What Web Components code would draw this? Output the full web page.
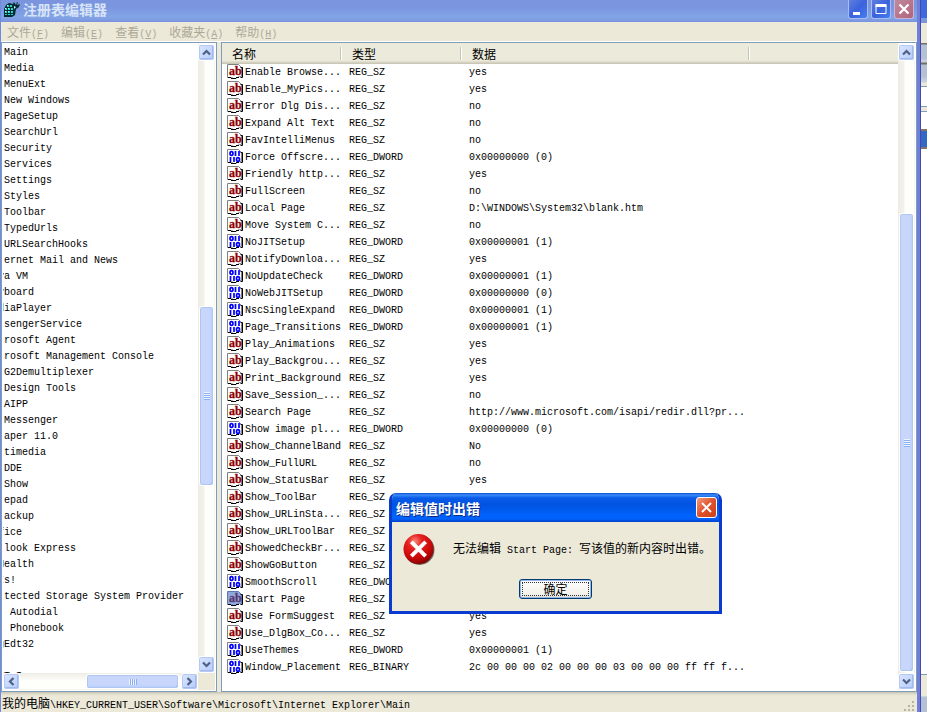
<!DOCTYPE html>
<html lang="zh-CN">
<head>
<meta charset="utf-8">
<title>注册表编辑器</title>
<style>
html, body { margin: 0; height: 100%; }
body {
  --face: #ece9d8; --edge: #7f9db9;
  font: 12px/16px "Liberation Mono", "Noto Sans CJK SC", monospace;
  color: #000; background: #fff; overflow: hidden;
}
</style>
</head>
<body>
<desktop-view></desktop-view>
<script>
const define = (name, html, setup) => customElements.define(name, class extends HTMLElement {
  constructor() {
    super();
    const root = this.attachShadow({ mode: 'open' });
    const t = document.createElement('template');
    t.innerHTML = html;
    root.append(t.content.cloneNode(true));
  }
  connectedCallback() { if (setup) setup(this, this.shadowRoot); }
});

const MIX = `.l { font-family: "Liberation Mono", monospace; font-size: 10px; }`;

/* Registry value icon: string or binary */
define('value-icon', `
<style>
:host { display: block; width: 17px; height: 16px; flex: none; white-space: normal; }
svg { display: block; }
text { font: bold 12px/12px "Liberation Serif", serif; fill: #900000; stroke: #900000; stroke-width: .3px; }
:host([selected]) path.page { fill: #8fa9dc; stroke: #5a78b8; }
:host([selected]) text { fill: #59376b; stroke: #59376b; }
</style>
<svg width="17" height="16" viewBox="0 0 17 16" aria-hidden="true">
<path class="page" d="M.5 13.500V.5h11l3 3v9h-2l-2 1-2 1h-2l-2-1h-4z" fill="#fff" stroke="#808080"/>
<path d="M13.500 3.500H15.500V13.500H13.500M1 13.500h3M4 14.500h5M9 13.500h3" fill="none" stroke="#000"/>
<g class="str"><text x="2" y="11">ab</text></g>
<g class="bin" fill="none" stroke="#0000ff" stroke-width="1.700"><ellipse cx="4.500" cy="4.500" rx="1.500" ry="1.800"/><path d="M8.500 2v5M12 2v5M3.500 8v5M7 8v5"/><ellipse cx="11" cy="10.500" rx="1.500" ry="1.800"/></g>
</svg>`, (h, r) => {
  r.querySelector(h.getAttribute('kind') === 'bin' ? '.str' : '.bin').remove();
});

/* Luna scroll bar; before / thumb / after give the track proportions */
define('luna-scroll', `
<style>
:host { display: flex; flex-direction: column; width: 17px; flex: none; background: linear-gradient(90deg, #eeede5, #f3f1ec 6px, #fefefb 7px, #fefefb 16px, #eeede5); }
:host([horizontal]) { flex-direction: row; width: auto; height: 17px; background: linear-gradient(#eeede5, #f6f5f0 4px, #fefefb 8px, #fefefb 16px, #eeede5); }
button { all: unset; box-sizing: border-box; width: 17px; height: 17px; flex: none; display: grid; place-items: center;
  border: 1px solid #fff; border-radius: 3px; background: linear-gradient(135deg, #dbe6ff, #b5cbfb); box-shadow: inset 0 0 0 1px #b3c8f5, inset -1px -1px 0 1px #a2bbec; }
.thumb { box-sizing: border-box; border: 1px solid #fff; border-radius: 3px; display: grid; place-items: center;
  background: linear-gradient(90deg, #c8d6fb 9px, #b9cffb 13px, #b2cbf9); box-shadow: inset 0 0 0 1px #b0c5f2, inset -1px -1px 0 #8facde; margin: 0 1px; }
:host([horizontal]) .thumb { background: linear-gradient(#c8d6fb 9px, #b9cffb 13px, #b2cbf9); margin: 1px 0; }
.grip { width: 6px; height: 8px; background: repeating-linear-gradient(#eef4fe 0 1px, #8cb0f8 1px 2px); }
:host([horizontal]) .grip { width: 8px; height: 6px; background: repeating-linear-gradient(90deg, #eef4fe 0 1px, #8cb0f8 1px 2px); }
:host([horizontal]) svg { transform: rotate(-90deg); }
</style>
<button type="button" aria-label="Back"><svg width="9" height="7" viewBox="0 0 9 7"><path d="M1 5.500 4.500 2 8 5.500" fill="none" stroke="#4d6185" stroke-width="2.200"/></svg></button>
<div class="a"></div><div class="thumb"><div class="grip"></div></div><div class="b"></div>
<button type="button" aria-label="Forward"><svg width="9" height="7" viewBox="0 0 9 7"><path d="M1 1.500 4.500 5 8 1.500" fill="none" stroke="#4d6185" stroke-width="2.200"/></svg></button>`,
(h, r) => {
  const [a, t, b] = h.getAttribute('track').split(' ');
  r.querySelector('.a').style.flex = a + ' 1 0';
  r.querySelector('.thumb').style.flex = t + ' 1 0';
  r.querySelector('.b').style.flex = b + ' 1 0';
});

define('title-bar', `
<style>
:host { display: flex; align-items: flex-start; height: 22px; flex: none; padding: 0 3px 0 2px; color: #d8e4f8;
  background: linear-gradient(#7a94de, #7b96e0 8px, #82a5e6 17px, #7d98e0 21px, #7a8cdc); }
h1 { margin: 0 auto 0 2px; font: bold 14px/18px "Noto Sans CJK SC", sans-serif; }
button { all: unset; box-sizing: border-box; width: 20px; height: 19px; margin-left: 3px; display: grid; place-items: center;
  border: 1px solid #a9bdf0; border-top: 0; border-radius: 0 0 3px 3px; background: linear-gradient(135deg, #5f80e0, #3a62dc 50%, #467ff0); }
button.x { background: linear-gradient(135deg, #c08a9c, #b0647c); border-color: #c8b4d8; }
svg { display: block; }
</style>
<svg width="18" height="18" viewBox="0 0 18 18" aria-hidden="true">
<path d="M1 9 3 5l3-2 4 1 1-2 2 3 1-3h1l-1 3 3-1-1 3-3 2-1 6-3 2H1z" fill="#052c30"/>
<path d="M4 5h2v2H4zM7 5h2v2H7zM2 8h2v2H2zM5 8h2v2H5zM8 8h2v2H8zM2 11h2v2H2zM5 11h2v2H5zM8 11h2v2H8zM2 14h2v1H2zM5 14h2v1H5zM8 14h2v1H8z" fill="#22d4d0"/>
<path d="M4 5h1v1H4zM2 8h1v1H2zM5 8h1v1H5zM2 11h1v1H2zM5 11h1v1H5zM11 6l2 1-2 2z" fill="#b8ffff"/>
</svg>
<h1>注册表编辑器</h1>
<button type="button" aria-label="最小化"><svg width="14" height="14"><path d="M2 10h7v3H2z" fill="#fff"/></svg></button>
<button type="button" aria-label="最大化"><svg width="14" height="14"><path d="M2 3.500h10v8H2z" fill="none" stroke="#fff"/><path d="M1.500 2h11v3h-11z" fill="#fff"/></svg></button>
<button type="button" class="x" aria-label="关闭"><svg width="14" height="14"><path d="M2.500 2.500l9 9M11.500 2.500l-9 9" stroke="#fff" stroke-width="2.200"/></svg></button>`);

define('menu-bar', `
<style>${MIX}
:host { display: flex; height: 19px; flex: none; background: var(--face); border-bottom: 1px solid #fff; }
button { all: unset; padding: 0 6px; font: 12px/19px "Noto Sans CJK SC", sans-serif; color: #aca899; white-space: nowrap; }
u { text-underline-offset: 1px; }
</style>
<button type="button">文件<span class="l">(<u>F</u>)</span></button><button type="button">编辑<span class="l">(<u>E</u>)</span></button><button type="button">查看<span class="l">(<u>V</u>)</span></button><button type="button">收藏夹<span class="l">(<u>A</u>)</span></button><button type="button">帮助<span class="l">(<u>H</u>)</span></button>`);

/* Tree keys; a leading "<" marks a label whose first letter is cut by the pane edge */
const keys = `Main|Media|MenuExt|New Windows|PageSetup|SearchUrl|Security|Services|Settings|Styles|Toolbar|TypedUrls|URLSearchHooks|ernet Mail and News|<va VM|<yboard|<diaPlayer|sengerService|rosoft Agent|rosoft Management Console|G2Demultiplexer|Design Tools|AIPP|Messenger|aper 11.0|timedia|DDE|Show|epad|ackup|<fice|look Express|<Health|<Is!|tected Storage System Provider| Autodial| Phonebook|<gEdt32||TeI`.split('|');

define('key-tree', `
<style>
:host { display: grid; grid-template: minmax(0, 1fr) 17px / minmax(0, 1fr) 17px; box-sizing: border-box; border: 1px solid var(--edge); padding: 1px; background: #fff; min-height: 0; }
ul { margin: 0; padding: 1px 0 0 1px; list-style: none; overflow: hidden; font-size: 10px; line-height: 16px; }
li { height: 16px; white-space: pre; }
li.cut { text-indent: -6px; }
.corner { background: var(--face); }
</style>
<ul></ul><luna-scroll track="246 179 171"></luna-scroll>
<luna-scroll horizontal track="67 92 2"></luna-scroll><div class="corner"></div>`, (h, r) => {
  const ul = r.querySelector('ul');
  for (const k of keys) {
    const li = document.createElement('li');
    if (k[0] === '<') li.className = 'cut';
    li.textContent = k.replace('<', '');
    ul.append(li);
  }
});

const values = `Enable Browse...|s|yes
Enable_MyPics...|s|yes
Error Dlg Dis...|s|no
Expand Alt Text|s|no
FavIntelliMenus|s|no
Force Offscre...|d|0x00000000 (0)
Friendly http...|s|yes
FullScreen|s|no
Local Page|s|D:\\WINDOWS\\System32\\blank.htm
Move System C...|s|no
NoJITSetup|d|0x00000001 (1)
NotifyDownloa...|s|yes
NoUpdateCheck|d|0x00000001 (1)
NoWebJITSetup|d|0x00000000 (0)
NscSingleExpand|d|0x00000001 (1)
Page_Transitions|d|0x00000001 (1)
Play_Animations|s|yes
Play_Backgrou...|s|yes
Print_Background|s|yes
Save_Session_...|s|no
Search Page|s|http://www.microsoft.com/isapi/redir.dll?pr...
Show image pl...|d|0x00000000 (0)
Show_ChannelBand|s|No
Show_FullURL|s|no
Show_StatusBar|s|yes
Show_ToolBar|s|
Show_URLinSta...|s|
Show_URLToolBar|s|
ShowedCheckBr...|s|
ShowGoButton|s|
SmoothScroll|d|
Start Page|s|
Use FormSuggest|s|yes
Use_DlgBox_Co...|s|yes
UseThemes|d|0x00000001 (1)
Window_Placement|b|2c 00 00 00 02 00 00 00 03 00 00 00 ff ff f...`.split('\n').map(v => v.split('|'));

define('value-list', `
<style>
:host { display: flex; box-sizing: border-box; border: 1px solid var(--edge); background: #fff; min-height: 0; min-width: 0; }
.view { flex: 1; min-width: 0; overflow: hidden; }
luna-scroll { margin: 1px 1px 1px 0; }
table { width: 100%; table-layout: fixed; border-collapse: separate; border-spacing: 0; font-size: 10px; }
th { height: 21px; box-sizing: border-box; padding: 0 0 0 10px; text-align: left; font: 12px/16px "Noto Sans CJK SC", sans-serif;
  background: linear-gradient(90deg, transparent calc(100% - 2px), #c7c5b2 calc(100% - 2px) calc(100% - 1px), #fff calc(100% - 1px)) 0 4px / 100% 13px no-repeat,
  linear-gradient(#ebeadb 18px, #e2decd 18px 19px, #d6d2c2 19px 20px, #cbc7b8 20px); }
th:last-child { background: linear-gradient(#ebeadb 18px, #e2decd 18px 19px, #d6d2c2 19px 20px, #cbc7b8 20px); }
td { height: 17px; padding: 0 0 0 7px; line-height: 17px; white-space: pre; }
td:first-child { padding-left: 5px; }
.n { display: flex; height: 17px; gap: 1px; }
</style>
<div class="view"><table>
<colgroup><col style="width:120px"><col style="width:120px"><col style="width:288px"><col></colgroup>
<thead><tr><th>名称</th><th>类型</th><th>数据</th><th></th></tr></thead><tbody></tbody></table></div>
<luna-scroll track="153 459 1"></luna-scroll>`, (h, r) => {
  const types = { s: 'REG_SZ', d: 'REG_DWORD', b: 'REG_BINARY' };
  r.querySelector('tbody').innerHTML = values.map(([n, t, d]) =>
    `<tr><td><div class="n"><value-icon kind="${t === 's' ? 'str' : 'bin'}"${n === 'Start Page' ? ' selected' : ''}></value-icon><span>${n}</span></div></td><td>${types[t]}</td><td>${d}</td><td></td></tr>`).join('');
});

define('status-bar', `
<style>${MIX}
:host { display: flex; align-items: center; height: 20px; box-sizing: border-box; flex: none; padding: 4px 2px 0 1px; white-space: nowrap;
  font: 12px/16px "Noto Sans CJK SC", sans-serif; background: linear-gradient(#c5c2b0, #e0ddcc 2px, var(--face) 4px); }
svg { margin-left: auto; align-self: flex-end; }
</style>
<span>我的电脑<span class="l">\\HKEY_CURRENT_USER\\Software\\Microsoft\\Internet Explorer\\Main</span></span>
<svg width="12" height="12" aria-hidden="true"><path d="M9 1h2v2H9zM5 5h2v2H5zM9 5h2v2H9zM1 9h2v2H1zM5 9h2v2H5zM9 9h2v2H9z" fill="#b8b4a3"/></svg>`);

define('error-dialog', `
<style>${MIX}
:host { display: block; box-sizing: border-box; border: 3px solid #0a3bd0; border-top: 0; border-radius: 7px 7px 0 0; background: var(--face);
  font: 12px/16px "Noto Sans CJK SC", sans-serif; overflow: hidden; }
header { display: flex; align-items: center; justify-content: space-between; height: 29px; padding: 0 2px 0 4px;
  background: linear-gradient(#0a4bd0, #3a8cf8 2px, #0a5ae8 5px, #0053e0 12px, #0262fc 22px, #0161fa 26px, #0040c8); }
h2 { margin: 0; font: bold 14px/20px "Noto Sans CJK SC", sans-serif; color: #fff; text-shadow: 1px 1px #0a2a80; }
button { all: unset; box-sizing: border-box; }
header button { width: 21px; height: 21px; border: 1px solid #fff; border-radius: 3px; display: grid; place-items: center; background: linear-gradient(135deg, #f09a80, #e0512c 50%, #cc4018); }
.msg { display: flex; gap: 18px; padding: 11px 8px 0 11px; white-space: nowrap; }
p { margin: 7px 0 0; }
.ok { display: flex; justify-content: center; padding: 13px 0 12px; }
.ok button { width: 73px; height: 20px; text-align: center; line-height: 16px; border: 1px solid #003c74; border-radius: 3px; padding: 1px;
  background: linear-gradient(#fff, #f2f1ea 80%, #dcd8cc); box-shadow: inset 0 0 0 1px #98b8ea; outline: 1px dotted #333; outline-offset: -4px; }
</style>
<header><h2>编辑值时出错</h2><button type="button" aria-label="关闭"><svg width="13" height="13"><path d="M2 2l9 9M11 2l-9 9" stroke="#fff" stroke-width="2"/></svg></button></header>
<div class="msg">
<svg width="33" height="33" viewBox="0 0 33 33" aria-hidden="true"><defs><radialGradient id="g" cx=".38" cy=".25" r=".8"><stop offset="0" stop-color="#f88878"/><stop offset=".3" stop-color="#e62020"/><stop offset=".7" stop-color="#c80808"/><stop offset="1" stop-color="#700"/></radialGradient></defs>
<circle cx="17" cy="17" r="15.500" fill="#6a6258"/><circle cx="16" cy="16" r="15.500" fill="url(#g)"/><path d="M10 10l12 12M22 10 10 22" stroke="#fff" stroke-width="4" stroke-linecap="square"/></svg>
<p>无法编辑<span class="l"> Start Page: </span>写该值的新内容时出错。</p></div>
<div class="ok"><button type="button">确定</button></div>`);

define('editor-window', `
<style>
:host { display: flex; flex-direction: column; min-width: 0; min-height: 0; box-sizing: border-box; border-left: 1px solid #6f8be0; border-right: 3px solid #6f7fd8; }
.panes { flex: 1; min-height: 0; display: grid; grid-template-columns: 216px minmax(0, 1fr); column-gap: 4px; background: var(--face); }
</style>
<title-bar></title-bar><menu-bar></menu-bar>
<div class="panes"><key-tree></key-tree><value-list></value-list></div>
<status-bar></status-bar>`);

/* Sliver of the window lying behind the editor */
define('back-window', `
<style>
:host { display: block; border-left: 1px solid #4646b4; box-sizing: border-box; background:
  linear-gradient(#3f68dd 0 18px, #7b96df 18px 23px, #ece9d8 23px 43px, #716f64 43px 44px, #b4c0d4 45px 58px, #ccd4de 62px, #716f64 63px 64px, #b4c0d4 65px 76px, #ccd4de 82px, #ece9d8 83px 86px, #7f9db9 86px 87px, #fff 87px 106px, #7f9db9 106px 107px, #ece9d8 107px 111px, #7f9db9 111px 112px, #fff 112px 129px, #857468 129px 131px, #316ac5 131px 147px, #857468 147px 149px, #fff 149px calc(100% - 38px), #7f9db9 calc(100% - 38px) calc(100% - 37px), #ece9d8 calc(100% - 37px) calc(100% - 16px), #b4c0d4 calc(100% - 15px)); }
</style>`);

define('desktop-view', `
<style>
:host { display: grid; grid-template: minmax(0, 1fr) / minmax(0, 1fr) 7px; height: 100vh; position: relative; }
error-dialog { position: absolute; left: 389px; top: 493px; width: 333px; }
</style>
<editor-window></editor-window><back-window></back-window><error-dialog></error-dialog>`);
</script>
</body>
</html>
